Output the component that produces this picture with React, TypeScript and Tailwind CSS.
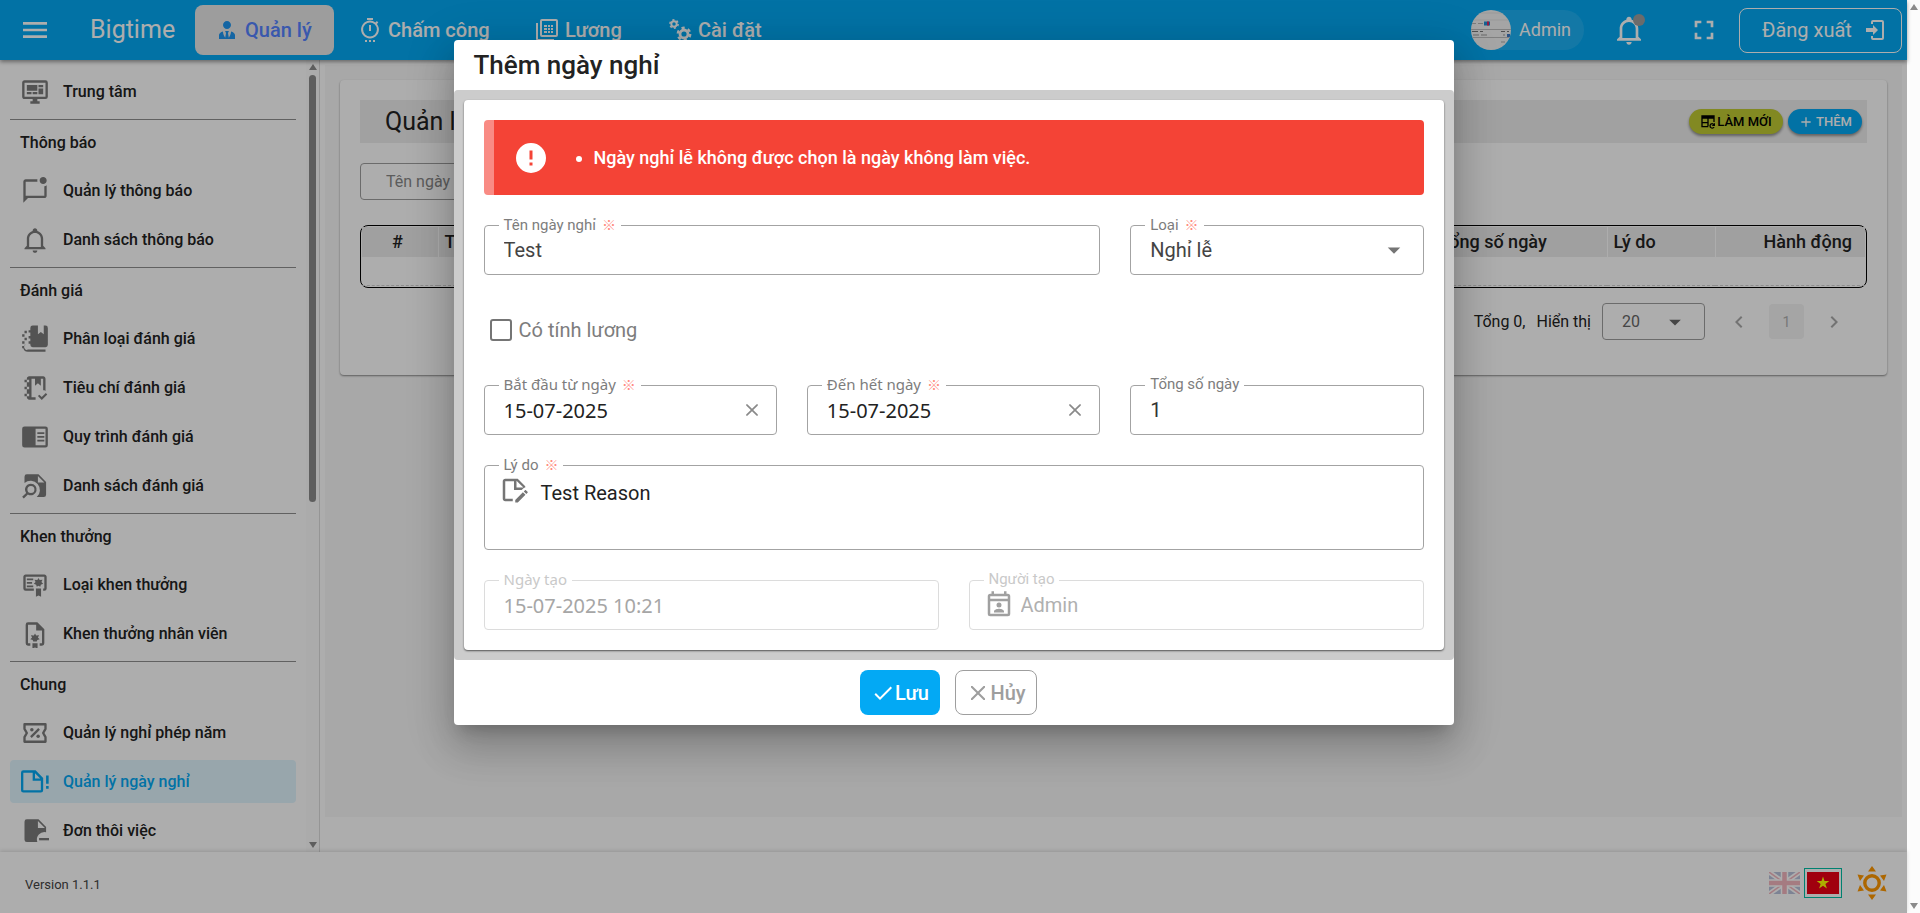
import type { ReactNode } from "react";

const FONT = "font-['Roboto','Noto_Sans',sans-serif]";

/* ---------- icons ---------- */

type IconProps = { className?: string; children: ReactNode };

function Icon({ className = "size-7", children }: IconProps) {
  return (
    <svg viewBox="0 0 24 24" fill="currentColor" aria-hidden="true" className={`shrink-0 ${className}`}>
      {children}
    </svg>
  );
}

const MenuIcon = ({ className }: { className?: string }) => (
  <Icon className={className}>
    <path d="M3 6H21V8H3V6M3 11H21V13H3V11M3 16H21V18H3V16Z" />
  </Icon>
);

const TieIcon = () => (
  <Icon className="size-6">
    <path d="M12 3C14.21 3 16 4.79 16 7S14.21 11 12 11 8 9.21 8 7 9.79 3 12 3M16 13.54C16 14.6 15.72 17.07 13.81 19.83L13 15L13.94 13.12C13.32 13.05 12.67 13 12 13S10.68 13.05 10.06 13.12L11 15L10.19 19.83C8.28 17.07 8 14.6 8 13.54C5.61 14.24 4 15.5 4 17V21H20V17C20 15.5 18.4 14.24 16 13.54Z" />
  </Icon>
);

const StopwatchIcon = () => (
  <Icon className="size-6">
    <path d="M9 0H15V2H9V0Z" />
    <path fillRule="evenodd" d="M12 2.6A8.9 8.9 0 0 1 17.4 4.5L18.9 3L20.3 4.4L18.9 5.9A8.9 8.9 0 1 1 12 2.6M12 4.6A6.9 6.9 0 1 0 12 18.4A6.9 6.9 0 1 0 12 4.6Z" />
    <path d="M11 7H13V13H11V7M7 22H9V24H7V22M11 22H13V24H11V22M15 22H17V24H15V22Z" />
  </Icon>
);

const PayrollIcon = () => (
  <Icon className="size-6">
    <path fillRule="evenodd" d="M7 1H21A2 2 0 0 1 23 3V17A2 2 0 0 1 21 19H7A2 2 0 0 1 5 17V3A2 2 0 0 1 7 1M7 3V17H21V3H7Z" />
    <path d="M1 5H3V21H19V23H3A2 2 0 0 1 1 21V5Z" />
    <path d="M9 7H12V9H9V7M13 7H15V9H13V7M16 7H18V9H16V7M9 10H12V12H9V10M13 10H15V12H13V10M16 10H18V12H16V10M9 13H12V15H9V13M13 13H15V15H13V13M16 13H18V15H16V13Z" />
  </Icon>
);

const CogsIcon = () => (
  <Icon className="size-6">
    <g fill="none" stroke="currentColor">
      <circle cx="6" cy="6" r="2.7" strokeWidth="1.9" />
      <circle cx="6" cy="6" r="4.1" strokeWidth="1.6" strokeDasharray="2.1 2.193" />
      <circle cx="16" cy="16" r="4" strokeWidth="2.8" />
      <circle cx="16" cy="16" r="6.2" strokeWidth="2.4" strokeDasharray="3.2 3.293" />
    </g>
  </Icon>
);

const BellIcon = ({ className }: { className?: string }) => (
  <Icon className={className}>
    <path d="M10 21H14C14 22.1 13.1 23 12 23S10 22.1 10 21M21 19V20H3V19L5 17V11C5 7.9 7.03 5.17 10 4.29V4C10 2.9 10.9 2 12 2S14 2.9 14 4V4.29C16.97 5.17 19 7.9 19 11V17L21 19M17 11C17 8.24 14.76 6 12 6S7 8.24 7 11V18H17V11Z" />
  </Icon>
);

const FullscreenIcon = () => (
  <Icon className="size-8">
    <path d="M5 5H10V7H7V10H5V5M14 5H19V10H17V7H14V5M17 14H19V19H14V17H17V14M10 17V19H5V14H7V17H10Z" />
  </Icon>
);

const LogoutIcon = () => (
  <Icon className="size-6">
    <path d="M10 17V14H3V10H10V7L15 12L10 17M10 2H19A2 2 0 0 1 21 4V20A2 2 0 0 1 19 22H10A2 2 0 0 1 8 20V18H10V20H19V4H10V6H8V4A2 2 0 0 1 10 2Z" />
  </Icon>
);

const DashboardIcon = () => (
  <Icon>
    <path d="M21 16V4H3V16H21M21 2A2 2 0 0 1 23 4V16A2 2 0 0 1 21 18H14V20H16V22H8V20H10V18H3C1.89 18 1 17.1 1 16V4C1 2.89 1.89 2 3 2H21M5 6H14V11H5V6M15 6H19V8H15V6M19 9V14H15V9H19M5 12H9V14H5V12M10 12H14V14H10V12Z" />
  </Icon>
);

const MessageIcon = () => (
  <Icon>
    <path d="M22 7V16C22 17.1 21.1 18 20 18H6L2 22V4C2 2.9 2.9 2 4 2H14.1C14 2.3 14 2.7 14 3S14 3.7 14.1 4H4V16H20V7.9C20.7 7.8 21.4 7.4 22 7M16 3C16 4.7 17.3 6 19 6S22 4.7 22 3 20.7 0 19 0 16 1.3 16 3Z" />
  </Icon>
);

const NotebooksIcon = () => (
  <Icon>
    <path d="M10 0.5H14.5V8L17 6L19.5 8V0.5H21A2 2 0 0 1 23 2.5V17A2 2 0 0 1 21 19H10A2 2 0 0 1 8 17V16H6.5V14H8V11.5H6.5V9.5H8V6.5H6.5V4.5H8V2.5A2 2 0 0 1 10 0.5Z" />
    <path d="M3 5H5V7H3V5M1 8H3V10H1V8M3 11H5V13H3V11M1 14H3V16H1V14M3 17H4A2 2 0 0 0 6 21H21V23H6A4 4 0 0 1 2 20H1V18H3Z" />
  </Icon>
);

const NotebookCheckIcon = () => (
  <Icon>
    <path d="M3 7V5H5V4C5 2.89 5.9 2 7 2H19C20.1 2 21 2.9 21 4V14.5C20.4 14.1 19.7 14 19 14V4H17V10L14.5 8L12 10V4H9V20H12.5V22H7C5.95 22 5 21.05 5 20V19H3V17H5V13H3V11H5V7H3M5 5V7H7V5H5M5 19H7V17H5V19M5 13H7V11H5V13Z" />
    <path d="M17.8 22.2L14.5 18.9L15.7 17.7L17.8 19.8L21.3 16.2L22.5 17.6L17.8 22.2Z" />
  </Icon>
);

const ReaderIcon = () => (
  <Icon>
    <path fillRule="evenodd" d="M3 3H21A2 2 0 0 1 23 5V19A2 2 0 0 1 21 21H3A2 2 0 0 1 1 19V5A2 2 0 0 1 3 3M12.5 5V19H21V5H12.5Z" />
    <path d="M14 8H20V9.5H14V8M14 11.2H20V12.7H14V11.2M14 14.4H20V15.9H14V14.4Z" />
  </Icon>
);

const NoteSearchIcon = () => (
  <Icon>
    <path fillRule="evenodd" d="M5 2H15L21.5 8.5V19.5A2 2 0 0 1 19.5 21.5H13.5A6.7 6.7 0 1 0 3 9.5V4A2 2 0 0 1 5 2M14.5 3.5V9H20L14.5 3.5Z" />
    <path fillRule="evenodd" d="M8.5 10A5 5 0 1 1 5.9 19.3L2.4 22.7L1 21.3L4.4 17.9A5 5 0 0 1 8.5 10M8.5 12A3 3 0 1 0 8.5 18A3 3 0 1 0 8.5 12Z" />
  </Icon>
);

const CertificateIcon = () => (
  <Icon>
    <path d="M4 3C2.89 3 2 3.89 2 5V15A2 2 0 0 0 4 17H11V15H4V5H20V15H19V17H20A2 2 0 0 0 22 15V5C22 3.89 21.1 3 20 3H4Z" />
    <path d="M5 6.5H10.5V8H5V6.5M5 9.5H9.5V11H5V9.5M5 12.5H10.5V14H5V12.5Z" />
    <path d="M15 6L16 7.8L18.5 7.5L17.5 9.5L19 11L17 11.7L16.5 13.5L15 12.7L13.5 13.5L13 11.7L11 11L12.5 9.5L11.5 7.5L14 7.8L15 6M12.8 15H17.2V22L15 21L12.8 22V15Z" />
  </Icon>
);

const FileCertificateIcon = () => (
  <Icon>
    <path d="M8 20H6V4H13V9H18V20H16V22H18A2 2 0 0 0 20 20V8L14 2H6A2 2 0 0 0 4 4V20A2 2 0 0 0 6 22H8V20Z" />
    <path d="M12 11.5L13 13.2L15.5 13L14.5 15L16 16.5L14 17.2L13.5 18.5H10.5L10 17.2L8 16.5L9.5 15L8.5 13L11 13.2L12 11.5M9.8 20H14.2V24.5L12 23.5L9.8 24.5V20Z" />
  </Icon>
);

const TicketIcon = () => (
  <Icon>
    <path
      d="M3 4.5H21V8.5L19 12L21 15.5V19.5H3V15.5L5 12L3 8.5V4.5Z"
      fill="none"
      stroke="currentColor"
      strokeWidth="2"
      strokeLinejoin="round"
    />
    <path d="M14.8 7.8L16.2 9.2L9.2 16.2L7.8 14.8L14.8 7.8Z" />
    <circle cx="9.3" cy="9.3" r="1.5" />
    <circle cx="14.7" cy="14.7" r="1.5" />
  </Icon>
);

const NoteAlertIcon = () => (
  <Icon>
    <path
      fillRule="evenodd"
      d="M2 2H12.5L19 8.5V19A2 2 0 0 1 17 21H2A2 2 0 0 1 0 19V4A2 2 0 0 1 2 2M2 4V19H17V11H10V4H2M12 4.5V9H16.5L12 4.5Z"
    />
    <path d="M21.5 6.5H23.7V13.5H21.5V6.5M21.5 15.5H23.7V17.7H21.5V15.5Z" />
  </Icon>
);

const NoteMinusIcon = () => (
  <Icon>
    <path fillRule="evenodd" d="M5 2H15L21.5 8.5V13A6.5 6.5 0 0 0 14 21.5H5A2 2 0 0 1 3 19.5V4A2 2 0 0 1 5 2M14.5 3.5V9.5H20.5L14.5 3.5Z" />
    <path d="M15.5 18H24V20H15.5V18Z" />
  </Icon>
);

const TableRefreshIcon = () => (
  <Icon className="size-4">
    <path
      fill="none"
      stroke="currentColor"
      strokeWidth="2"
      d="M12.5 19H3V3H21V12M3 13H13M12 7V18M3 6H21M3 4.5H21"
    />
    <path d="M18 13.5C19.1 13.5 20.1 14 20.8 14.7L22.5 13V18H17.5L19.5 16A2.3 2.3 0 1 0 20 19.5H22A4.2 4.2 0 1 1 18 13.5Z" />
  </Icon>
);

const PlusIcon = () => (
  <Icon className="size-4">
    <path d="M19 13H13V19H11V13H5V11H11V5H13V11H19V13Z" />
  </Icon>
);

const CheckIcon = () => (
  <Icon className="size-6">
    <path d="M21 7L9 19L3.5 13.5L4.91 12.09L9 16.17L19.59 5.59L21 7Z" />
  </Icon>
);

const CloseIcon = ({ className = "size-5" }: { className?: string }) => (
  <Icon className={className}>
    <path d="M13.46 12L19 17.54V19H17.54L12 13.46L6.46 19H5V17.54L10.54 12L5 6.46V5H6.46L12 10.54L17.54 5H19V6.46L13.46 12Z" />
  </Icon>
);

const CaretIcon = ({ className = "size-7" }: { className?: string }) => (
  <Icon className={className}>
    <path d="M7 10L12 15L17 10H7Z" />
  </Icon>
);

const AlertIcon = () => (
  <Icon className="size-9">
    <path d="M13 13H11V7H13M13 17H11V15H13M12 2A10 10 0 0 0 2 12A10 10 0 0 0 12 22A10 10 0 0 0 22 12A10 10 0 0 0 12 2Z" />
  </Icon>
);

const NoteEditIcon = () => (
  <Icon className="size-[30px]">
    <path
      fillRule="evenodd"
      d="M18.13 12L19.39 10.74C19.83 10.3 20.39 10.06 21 10V9L15 3H5C3.89 3 3 3.89 3 5V19C3 20.1 3.89 21 5 21H11V19.13L11.13 19H5V5H12V12H18.13M14 4.5L19.5 10H14V4.5Z"
    />
    <path d="M19.13 13.83L21.17 15.87L15.04 22H13V19.96L19.13 13.83M22.85 14.19L21.87 15.17L19.83 13.13L20.81 12.15C21 11.95 21.33 11.95 21.53 12.15L22.85 13.47C23.05 13.67 23.05 14 22.85 14.19Z" />
  </Icon>
);

const CalendarUserIcon = () => (
  <Icon className="size-[30px]">
    <path
      fillRule="evenodd"
      d="M6 1H8V3H16V1H18V3H19A2 2 0 0 1 21 5V19A2 2 0 0 1 19 21H5A2 2 0 0 1 3 19V5A2 2 0 0 1 5 3H6V1M5 5V7H19V5H5M5 9V19H19V9H5Z"
    />
    <path d="M12 10A2 2 0 1 1 12 14A2 2 0 1 1 12 10M8 18V17C8 15.67 10.67 15 12 15S16 15.67 16 17V18H8Z" />
  </Icon>
);

const ChevronIcon = ({ flip = false }: { flip?: boolean }) => (
  <Icon className="size-6">
    {flip ? (
      <path d="M8.59 16.58L13.17 12L8.59 7.41L10 6L16 12L10 18L8.59 16.58Z" />
    ) : (
      <path d="M15.41 16.58L10.83 12L15.41 7.41L14 6L8 12L14 18L15.41 16.58Z" />
    )}
  </Icon>
);

const SunIcon = () => (
  <svg viewBox="0 0 30 34" className="h-[34px] w-[30px]" aria-hidden="true">
    <circle cx="15" cy="17" r="7.2" fill="none" stroke="#ff9800" strokeWidth="3.4" />
    <path
      fill="#ff9800"
      d="M15 0L19 5.5H11L15 0M15 34L11 28.5H19L15 34M0.5 8.5L7 9.5L3 15L0.5 8.5M29.5 8.5L27 15L23 9.5L29.5 8.5M0.5 25.5L3 19L7 24.5L0.5 25.5M29.5 25.5L23 24.5L27 19L29.5 25.5Z"
    />
  </svg>
);

const UkFlag = () => (
  <svg viewBox="0 0 31 22" className="h-[22px] w-[31px] opacity-30" aria-hidden="true">
    <rect width="31" height="22" fill="#1b3a8c" />
    <path d="M0 0L31 22M31 0L0 22" stroke="#fff" strokeWidth="5" />
    <path d="M0 0L31 22M31 0L0 22" stroke="#d8102f" strokeWidth="1.5" />
    <path d="M15.5 0V22M0 11H31" stroke="#fff" strokeWidth="7.5" />
    <path d="M15.5 0V22M0 11H31" stroke="#d8102f" strokeWidth="4.5" />
  </svg>
);

const VnFlag = () => (
  <svg viewBox="0 0 32 22" className="h-[22px] w-[32px]" aria-hidden="true">
    <rect width="32" height="22" fill="#ec0015" />
    <path d="M16 4.5L17.5 9.1H22.3L18.4 11.9L19.9 16.5L16 13.7L12.1 16.5L13.6 11.9L9.7 9.1H14.5L16 4.5Z" fill="#ffff00" />
  </svg>
);

const AvatarPicture = () => (
  <svg viewBox="0 0 40 40" className="size-10 shrink-0 rounded-full" aria-hidden="true">
    <rect width="40" height="40" fill="#f4f4f4" />
    <path d="M0 3H40M0 10H40" stroke="#e2e2e2" />
    <path d="M1 13.5H5M7 13.5H12" stroke="#b5b5b5" />
    <path d="M13 11.5H19V15.5H13V11.5Z" fill="#1f8fd8" />
    <path d="M16 11.5H18V15.5H16V11.5Z" fill="#e0245e" />
    <path d="M0 19.5H40M0 27.5H40" stroke="#bdbdbd" />
    <path d="M1 21.5H7M9 21.5H12M30 21.5H34M36 21.5H38" stroke="#777" />
    <path d="M2 25H8M10 25H16M32 25H34" stroke="#999" />
    <path d="M36 24H39V27H36V24Z" fill="#3b78c4" />
    <path d="M30 32H34" stroke="#aaa" />
  </svg>
);

/* ---------- scroll bars ---------- */

function ScrollArrow({ down = false }: { down?: boolean }) {
  return (
    <svg viewBox="0 0 8 6" className="h-[6px] w-2 shrink-0" aria-hidden="true">
      <path d={down ? "M0 0H8L4 6Z" : "M4 0L8 6H0Z"} fill="#8b8b8b" />
    </svg>
  );
}

/* ---------- header ---------- */

const TABS = [
  { label: "Quản lý", icon: <TieIcon />, width: "w-[139px]", active: true },
  { label: "Chấm công", icon: <StopwatchIcon />, width: "w-[173px]", active: false },
  { label: "Lương", icon: <PayrollIcon />, width: "w-[129px]", active: false },
  { label: "Cài đặt", icon: <CogsIcon />, width: "w-[140px]", active: false },
];

function Header() {
  return (
    <header className="z-10 flex h-[60px] shrink-0 items-center bg-[#03a9f4] text-white shadow-[0_2px_4px_rgba(0,0,0,0.4)]">
      <button type="button" aria-label="Menu" className="ml-[19px] flex">
        <MenuIcon className="size-8" />
      </button>
      <h1 className="ml-[39px] w-[105px] text-[25px]">Bigtime</h1>
      <nav className="flex gap-1">
        {TABS.map((tab) => (
          <a
            key={tab.label}
            href="#"
            className={`flex h-[50px] items-center gap-[6px] rounded-lg pl-5 text-xl font-medium ${tab.width} ${
              tab.active ? "bg-[#e8e8e8] text-[#5582ff]" : ""
            }`}
          >
            <span className={tab.active ? "text-[#1e96f0]" : ""}>{tab.icon}</span>
            {tab.label}
          </a>
        ))}
      </nav>
      <div className="ml-auto flex items-center pr-[5px]">
        <div className="flex h-10 w-[113px] items-center gap-2 rounded-full bg-white/10 text-lg">
          <AvatarPicture />
          Admin
        </div>
        <button type="button" aria-label="Thông báo" className="relative ml-[29px] flex">
          <BellIcon className="size-8" />
          <span className="absolute top-0 right-0 size-3 rounded-full bg-[#9e9e9e]" />
        </button>
        <button type="button" aria-label="Toàn màn hình" className="ml-[43px] flex">
          <FullscreenIcon />
        </button>
        <button
          type="button"
          className="ml-[19px] flex h-[45px] w-[163px] items-center justify-between rounded-lg border border-white pr-[14px] pl-[22px] text-xl"
        >
          Đăng xuất
          <LogoutIcon />
        </button>
      </div>
    </header>
  );
}

/* ---------- side bar ---------- */

const SECTIONS = [
  { title: "", items: [{ label: "Trung tâm", icon: <DashboardIcon /> }] },
  {
    title: "Thông báo",
    items: [
      { label: "Quản lý thông báo", icon: <MessageIcon /> },
      { label: "Danh sách thông báo", icon: <BellIcon /> },
    ],
  },
  {
    title: "Đánh giá",
    items: [
      { label: "Phân loại đánh giá", icon: <NotebooksIcon /> },
      { label: "Tiêu chí đánh giá", icon: <NotebookCheckIcon /> },
      { label: "Quy trình đánh giá", icon: <ReaderIcon /> },
      { label: "Danh sách đánh giá", icon: <NoteSearchIcon /> },
    ],
  },
  {
    title: "Khen thưởng",
    items: [
      { label: "Loại khen thưởng", icon: <CertificateIcon /> },
      { label: "Khen thưởng nhân viên", icon: <FileCertificateIcon /> },
    ],
  },
  {
    title: "Chung",
    items: [
      { label: "Quản lý nghỉ phép năm", icon: <TicketIcon /> },
      { label: "Quản lý ngày nghỉ", icon: <NoteAlertIcon /> },
      { label: "Đơn thôi việc", icon: <NoteMinusIcon /> },
    ],
  },
];

const ACTIVE_ITEM = "Quản lý ngày nghỉ";

function Sidebar() {
  return (
    <aside className="flex w-80 shrink-0 border-r border-[#dcdcdc] bg-white">
      <nav className="flex min-h-0 flex-1 flex-col overflow-hidden px-[10px] pt-[7px]">
        {SECTIONS.map((section) => (
          <section
            key={section.title}
            className="flex shrink-0 flex-col border-[#8f8f8f] pb-[3px] not-last:border-b"
          >
            {section.title && (
              <h2 className="flex h-[46px] items-center pl-[10px] text-base font-medium text-[#222]">
                {section.title}
              </h2>
            )}
            {section.items.map((item) => (
              <a
                key={item.label}
                href="#"
                className={`my-[3px] flex h-[43px] items-center gap-[14px] rounded-[4px] pl-[11px] text-base font-medium ${
                  item.label === ACTIVE_ITEM ? "bg-[#e1f5fe] text-[#03a9f4]" : "text-[#222]"
                }`}
              >
                <span className={item.label === ACTIVE_ITEM ? "" : "text-[#7b7b7b]"}>{item.icon}</span>
                {item.label}
              </a>
            ))}
          </section>
        ))}
      </nav>
      <div className="flex w-[13px] shrink-0 flex-col items-center bg-[#fcfcfc] py-1">
        <ScrollArrow />
        <div className="my-[5px] w-[7px] flex-1">
          <div className="h-[56%] rounded-full bg-[#8b8b8b]" />
        </div>
        <ScrollArrow down />
      </div>
    </aside>
  );
}

/* ---------- main panel ---------- */

const HEAD_CELL = "border-r border-white px-[6px] font-medium";

function MainPanel() {
  return (
    <main className="min-w-0 flex-1 bg-white px-[5px] pt-[5px] pb-[35px]">
      <div className="h-full bg-[#f8f8f8] p-[15px]">
        <div className="rounded-[4px] bg-white p-5 pb-[35px] shadow-[0_1px_2px_rgba(0,0,0,0.45)]">
          <div className="flex h-[43px] items-center gap-[5px] bg-[#eeeeee] pr-[5px] pl-[25px]">
            <h2 className="mr-auto text-[25px] text-[#222]">Quản lý ngày nghỉ</h2>
            <button
              type="button"
              className="flex h-[25px] w-[94px] items-center justify-center gap-px rounded-full bg-[#c0ca33] text-[13px] font-medium text-black shadow-[0_2px_3px_rgba(0,0,0,0.4)]"
            >
              <TableRefreshIcon />
              LÀM MỚI
            </button>
            <button
              type="button"
              className="flex h-[25px] w-[74px] items-center justify-center gap-[2px] rounded-full bg-[#03a9f4] text-[13px] font-medium text-white shadow-[0_2px_3px_rgba(0,0,0,0.4)]"
            >
              <PlusIcon />
              THÊM
            </button>
          </div>
          <input
            aria-label="Tên ngày nghỉ"
            placeholder="Tên ngày nghỉ"
            className="mt-5 block h-[37px] w-[360px] rounded-[4px] border border-[#9e9e9e] px-[25px] text-base placeholder:text-[#888]"
          />
          <div className="mt-[25px] h-[63px] rounded-lg border border-black p-px">
            <table className="w-full table-fixed border-b border-dashed border-[#d0d0d0] text-left text-lg text-[#222]">
              <thead>
                <tr className="h-[30px] bg-[#ececec]">
                  <th className={`${HEAD_CELL} w-[76px]`}>
                    <span className="ml-6">#</span>
                  </th>
                  <th className={HEAD_CELL}>Tên</th>
                  <th className={`${HEAD_CELL} w-[174px]`}>Tổng số ngày</th>
                  <th className={`${HEAD_CELL} w-[108px]`}>Lý do</th>
                  <th className="w-[150px] pr-[13px] text-right font-medium">Hành động</th>
                </tr>
              </thead>
              <tbody>
                <tr className="h-[28px]">
                  <td colSpan={5} />
                </tr>
              </tbody>
            </table>
          </div>
          <div className="mt-[15px] flex items-center justify-end pr-[21px] text-base text-[#222]">
            <span>Tổng 0,</span>
            <label htmlFor="page-size" className="ml-[11px]">
              Hiển thị
            </label>
            <div className="ml-[11px] flex h-[37px] w-[103px] items-center rounded-[4px] border border-[#9e9e9e] text-[#666]">
              <select id="page-size" defaultValue="20" className="w-[58px] appearance-none pl-[19px] text-base">
                <option>20</option>
              </select>
              <CaretIcon />
            </div>
            <button type="button" aria-label="Trang trước" className="ml-[22px] flex text-[#aaa]">
              <ChevronIcon />
            </button>
            <button type="button" className="mx-[18px] size-[35px] rounded-[4px] bg-[#f3f3f3] text-sm text-[#b0b0b0]">
              1
            </button>
            <button type="button" aria-label="Trang sau" className="flex text-[#aaa]">
              <ChevronIcon flip />
            </button>
          </div>
        </div>
      </div>
    </main>
  );
}

function Footer() {
  return (
    <footer className="z-10 flex h-[61px] shrink-0 items-center bg-white pr-5 pl-[25px] text-[13px] text-[#444] shadow-[0_-1px_4px_rgba(0,0,0,0.15)]">
      <span className="mt-[5px]">Version 1.1.1</span>
      <div className="ml-auto flex items-center">
        <button type="button" aria-label="English" className="flex">
          <UkFlag />
        </button>
        <button
          type="button"
          aria-label="Tiếng Việt"
          className="ml-1 flex h-[30px] w-[38px] items-center justify-center border border-[#00bfa5]"
        >
          <VnFlag />
        </button>
        <button type="button" aria-label="Giao diện" className="ml-[15px] flex">
          <SunIcon />
        </button>
      </div>
    </footer>
  );
}

/* ---------- dialog ---------- */

type FieldProps = {
  id: string;
  label: string;
  required?: boolean;
  disabled?: boolean;
  tall?: boolean;
  humanist?: boolean;
  className?: string;
  children: ReactNode;
};

function Field({ id, label, required, disabled, tall, humanist, className = "", children }: FieldProps) {
  return (
    <div
      className={`relative flex rounded-[4px] border ${tall ? "h-[85px] items-start" : "h-[50px] items-center"} ${
        disabled ? "border-[#dcdcdc]" : "border-[#a3a3a3]"
      } ${className}`}
    >
      <label
        htmlFor={id}
        className={`absolute -top-3 left-[14px] bg-white px-[5px] text-[15px] leading-5 whitespace-nowrap ${
          disabled ? "text-[#c9c9c9]" : "text-[#7d7d7d]"
        } ${humanist ? "font-['Noto_Sans',sans-serif]" : ""}`}
      >
        {label}
        {required && <span className="pl-[6px] font-['Noto_Sans_CJK_JP',sans-serif] text-sm text-[#ff8a80]">※</span>}
      </label>
      {children}
    </div>
  );
}

const INPUT = "h-full min-w-0 flex-1 bg-transparent pl-[19px] text-xl";
const DATE_INPUT = "h-full min-w-0 flex-1 bg-transparent pl-[19px] font-['Noto_Sans',sans-serif] text-xl";

function HolidayDialog() {
  return (
    <div
      role="dialog"
      aria-labelledby="dialog-title"
      className="w-[1000px] max-w-full rounded-[4px] bg-white shadow-[0_11px_15px_-7px_rgba(0,0,0,0.2),0_24px_38px_3px_rgba(0,0,0,0.14),0_9px_46px_8px_rgba(0,0,0,0.12)]"
    >
      <h2 id="dialog-title" className="flex h-[50px] items-center px-5 text-[26px] font-medium text-[#222]">
        Thêm ngày nghỉ
      </h2>
      <div className="rounded-[4px] bg-[#cccccc] p-[10px]">
        <form className="flex flex-col rounded-[4px] bg-white p-5 shadow-[0_1px_2px_rgba(0,0,0,0.6)]">
          <div
            role="alert"
            className="flex h-[75px] items-center rounded-[4px] border-l-[10px] border-[#f98b84] bg-[#f44336] pl-[19px] text-white"
          >
            <AlertIcon />
            <ul className="ml-[45px] list-disc text-lg font-medium">
              <li>Ngày nghỉ lễ không được chọn là ngày không làm việc.</li>
            </ul>
          </div>

          <div className="mt-[30px] grid grid-cols-3 gap-x-[30px]">
            <Field id="name" label="Tên ngày nghỉ" required className="col-span-2">
              <input id="name" defaultValue="Test" className={`${INPUT} text-[#444]`} />
            </Field>
            <Field id="kind" label="Loại" required>
              <select id="kind" defaultValue="Nghỉ lễ" className={`${INPUT} appearance-none text-[#444]`}>
                <option>Nghỉ lễ</option>
              </select>
              <CaretIcon className="mr-[14px] size-[30px] text-[#757575]" />
            </Field>
          </div>

          <label className="mt-[44px] ml-[6px] flex h-[22px] items-center gap-[7px] text-xl text-[#7d7d7d]">
            <input
              type="checkbox"
              className="size-[22px] appearance-none rounded-[3px] border-2 border-[#757575] checked:bg-[#03a9f4]"
            />
            Có tính lương
          </label>

          <div className="mt-[44px] grid grid-cols-3 gap-x-[30px]">
            <Field id="from" label="Bắt đầu từ ngày" required humanist>
              <input id="from" defaultValue="15-07-2025" className={`${DATE_INPUT} text-[#222]`} />
              <button type="button" aria-label="Xóa" className="mr-[14px] flex text-[#8a8a8a]">
                <CloseIcon />
              </button>
            </Field>
            <Field id="to" label="Đến hết ngày" required humanist>
              <input id="to" defaultValue="15-07-2025" className={`${DATE_INPUT} text-[#222]`} />
              <button type="button" aria-label="Xóa" className="mr-[14px] flex text-[#8a8a8a]">
                <CloseIcon />
              </button>
            </Field>
            <Field id="total" label="Tổng số ngày">
              <input id="total" defaultValue="1" className={`${INPUT} text-[#333]`} />
            </Field>
          </div>

          <div className="mt-[30px]">
            <Field id="reason" label="Lý do" required tall>
              <span className="mt-[9px] ml-[14px] text-[#757575]">
                <NoteEditIcon />
              </span>
              <textarea
                id="reason"
                defaultValue="Test Reason"
                className="mt-[13px] h-[60px] flex-1 resize-none bg-transparent pl-3 text-xl text-[#222]"
              />
            </Field>
          </div>

          <div className="mt-[30px] grid grid-cols-2 gap-x-[30px]">
            <Field id="created" label="Ngày tạo" disabled humanist>
              <input id="created" disabled defaultValue="15-07-2025 10:21" className={`${DATE_INPUT} text-[#a6a6a6]`} />
            </Field>
            <Field id="creator" label="Người tạo" disabled>
              <span className="ml-[14px] text-[#a0a0a0]">
                <CalendarUserIcon />
              </span>
              <input
                id="creator"
                disabled
                defaultValue="Admin"
                className="h-full min-w-0 flex-1 bg-transparent pl-[7px] text-xl text-[#b0b0b0]"
              />
            </Field>
          </div>
        </form>
      </div>
      <div className="flex h-[65px] items-center justify-center gap-[15px] pr-[10px]">
        <button
          type="button"
          className="flex h-[45px] w-20 items-center justify-center rounded-lg bg-[#03a9f4] text-xl font-medium text-white"
        >
          <CheckIcon />
          Lưu
        </button>
        <button
          type="button"
          className="flex h-[45px] w-[82px] items-center justify-center rounded-lg border border-[#9e9e9e] text-xl font-medium text-[#9e9e9e]"
        >
          <CloseIcon className="size-6" />
          Hủy
        </button>
      </div>
    </div>
  );
}

export default function App() {
  return (
    <div className={`flex h-screen overflow-hidden bg-white ${FONT}`}>
      <div className="relative flex min-w-0 flex-1 flex-col">
        <Header />
        <div className="flex min-h-0 flex-1">
          <Sidebar />
          <MainPanel />
        </div>
        <Footer />
        <div className="absolute inset-0 z-20 flex items-start justify-center bg-black/32 pt-10">
          <HolidayDialog />
        </div>
      </div>
      <div className="flex w-[13px] shrink-0 flex-col items-center justify-between bg-[#fcfcfc] py-1">
        <ScrollArrow />
        <ScrollArrow down />
      </div>
    </div>
  );
}
